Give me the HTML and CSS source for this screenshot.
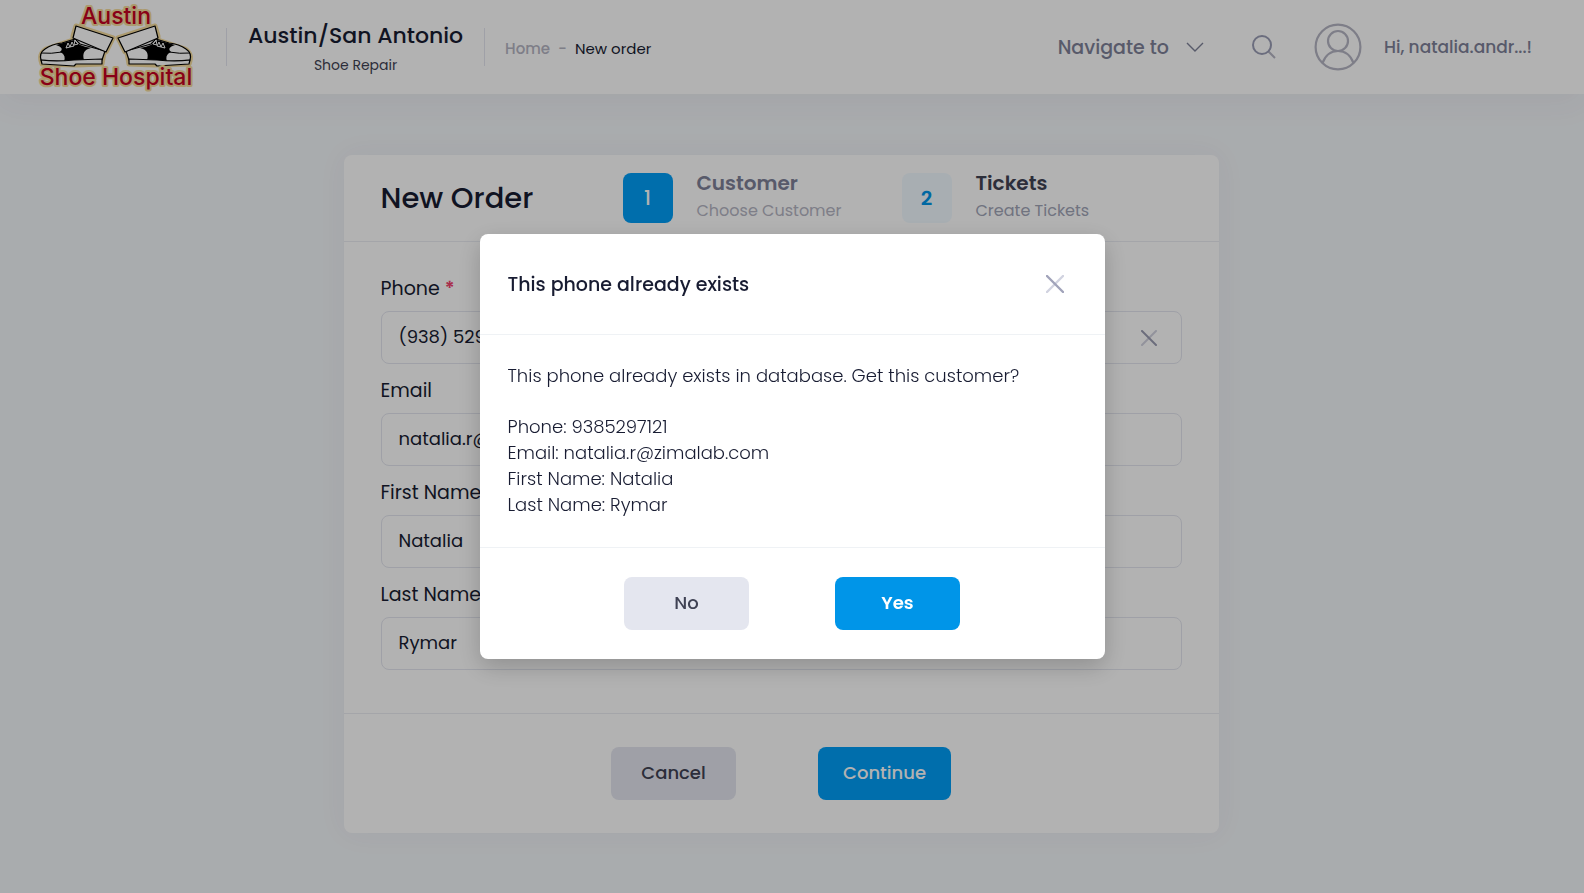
FILE: index.html
```html
<!DOCTYPE html>
<html lang="en">
<head>
<meta charset="utf-8">
<meta name="viewport" content="width=device-width, initial-scale=1">
<title>New order</title>
<link rel="stylesheet" href="styles.css">
</head>
<body>
<header class="topbar">
  <a class="brand" href="#" aria-label="Austin Shoe Hospital">
    <svg class="brand-logo" viewBox="0 0 160 90" width="160" height="90">
      <defs>
        <g id="shoe">
          <path class="halo" d="M38 24 L75 36 L68 50 L66 50 L64 62 L38 63 L4 62 Q0 52 8 47 L35 38 L35 34 Z"/>
          <path class="leather" d="M3 58 Q1 51 7 47 Q14 42 24 41 L37 37 L42 42 L67 49 L64 58 Q36 61 3 58 Z"/>
          <path class="patch" d="M18 43 L25 41 L36 38 Q40 44 53 46 Q43 48 46 58 L26 59 Q28 54 24 51 L22 50 Q27 46 18 43 Z"/>
          <path class="line" d="M3 51 Q13 52 24 50"/>
          <path class="leather" d="M3 58 Q18 60 36 58 L64 57 L64 62 L38 62 L36 64 L4 62 Z"/>
          <path class="leather" d="M38 24 L75 36 L68 50 L35 36 Z"/>
          <path class="lace" d="M30 41 L28 46 L32 45 Z M34 40 L32 45 L36 44 Z M37 38 L36 43 L40 42 Z"/>
        </g>
      </defs>
      <use href="#shoe"/>
      <use href="#shoe" transform="translate(155 0) scale(-1 1)"/>
      <text class="logo-text" x="78" y="22" text-anchor="middle">Austin</text>
      <text class="logo-text" x="78" y="83" text-anchor="middle">Shoe Hospital</text>
    </svg>
  </a>
  <div class="store">
    <div class="store-name">Austin/San Antonio</div>
    <div class="store-kind">Shoe Repair</div>
  </div>
  <nav class="crumbs" aria-label="Breadcrumb">
    <a href="#">Home</a><span class="dash">-</span><span>New order</span>
  </nav>
  <div class="tools">
    <button class="navigate" type="button">Navigate to
      <svg width="18" height="12" viewBox="0 0 18 12"><path d="M1 2 L9 10 L17 2" fill="none" stroke="#7e8299" stroke-width="1.4"/></svg>
    </button>
    <button class="plain" type="button" aria-label="Search">
      <svg width="26" height="26" viewBox="0 0 26 26" fill="none" stroke-width="2"><path d="M17 17 L24 24" stroke="#b5b5c3"/><circle cx="11" cy="11" r="9" stroke="#9a9db5"/></svg>
    </button>
    <button class="account" type="button">
      <svg width="48" height="48" viewBox="0 0 48 48" fill="none" stroke="#b5b5c3" stroke-width="2.2"><circle cx="24" cy="24" r="22.4"/><circle cx="24" cy="18" r="10"/><path d="M8.500 40 Q13 28 24 28 Q35 28 39.500 40"/></svg>
      <span>Hi, natalia.andr...!</span>
    </button>
  </div>
</header>

<main class="page">
  <form class="card">
    <div class="card-head">
      <h1>New Order</h1>
      <ol class="steps">
        <li class="step current"><span class="num">1</span><div class="step-text"><div class="step-name">Customer</div><div class="step-note">Choose Customer</div></div></li>
        <li class="step"><span class="num">2</span><div class="step-text"><div class="step-name">Tickets</div><div class="step-note">Create Tickets</div></div></li>
      </ol>
    </div>
    <div class="fields">
      <div class="field">
        <label for="phone">Phone <span class="required">*</span></label>
        <div class="control">
          <input id="phone" type="tel" value="(938) 529-7121">
          <button class="clear" type="button" aria-label="Clear phone">
            <svg width="16" height="16" viewBox="0 0 16 16" stroke-width="2" stroke-linecap="round"><path d="M15 1 L1 15" stroke="#d1d3e0"/><path d="M1 1 L15 15" stroke="#9a9cb2"/></svg>
          </button>
        </div>
      </div>
      <div class="field">
        <label for="email">Email</label>
        <div class="control"><input id="email" type="email" value="natalia.r@zimalab.com"></div>
      </div>
      <div class="field">
        <label for="first">First Name</label>
        <div class="control"><input id="first" type="text" value="Natalia"></div>
      </div>
      <div class="field">
        <label for="last">Last Name</label>
        <div class="control"><input id="last" type="text" value="Rymar"></div>
      </div>
    </div>
    <div class="card-foot">
      <button class="btn muted" type="button">Cancel</button>
      <button class="btn primary" type="button">Continue</button>
    </div>
  </form>
</main>

<div class="overlay">
  <section class="modal" role="dialog" aria-modal="true" aria-labelledby="modal-title">
    <div class="modal-head">
      <h2 id="modal-title">This phone already exists</h2>
      <button class="plain" type="button" aria-label="Close">
        <svg width="18" height="18" viewBox="0 0 18 18" stroke-width="2.4" stroke-linecap="round"><path d="M17 1 L1 17" stroke="#d1d3e0"/><path d="M1 1 L17 17" stroke="#a1a3ba"/></svg>
      </button>
    </div>
    <div class="modal-body">
      <p>This phone already exists in database. Get this customer?</p>
      <p>Phone: 9385297121<br>Email: natalia.r@zimalab.com<br>First Name: Natalia<br>Last Name: Rymar</p>
    </div>
    <div class="modal-foot">
      <button class="btn muted" type="button">No</button>
      <button class="btn primary strong" type="button">Yes</button>
    </div>
  </section>
</div>
</body>
</html>
```
FILE: styles.css
```css
* { box-sizing: border-box; }
body {
  margin: 0;
  min-height: 100vh;
  background: #f3f6f9;
  color: #181c32;
  font-family: Poppins, Inter, "Liberation Sans", sans-serif;
  font-size: 18px;
}
h1, h2, p, ol { margin: 0; padding: 0; font-weight: 500; }
button, input { font: inherit; color: inherit; }
button { border: 0; padding: 0; background: none; cursor: pointer; }
a { color: inherit; text-decoration: none; }
svg { display: block; }

.topbar {
  display: flex;
  align-items: center;
  height: 94px;
  padding: 0 52px 0 38px;
  background: #fff;
  box-shadow: 0 10px 30px rgba(82, 63, 105, 0.05);
}
.brand { padding-right: 28px; }
.logo-text {
  font-family: Inter, "Liberation Sans", sans-serif;
  font-size: 23px;
  font-weight: 500;
  fill: #c40022;
  stroke: #f5dc9c;
  stroke-width: 4px;
  stroke-linejoin: round;
  paint-order: stroke;
}
.halo { fill: none; stroke: #f5dc9c; stroke-width: 5px; stroke-linejoin: round; }
.leather { fill: #fff; stroke: #000; stroke-width: 1.2px; stroke-linejoin: round; }
.patch { fill: #000; }
.line { fill: none; stroke: #000; stroke-width: 1px; }
.lace { fill: none; stroke: #fff; stroke-width: 1px; }

.store {
  height: 38px;
  padding: 4px 21px 0;
  border: solid #e4e6ef;
  border-width: 0 1px;
  display: flex;
  flex-direction: column;
  justify-content: center;
  text-align: center;
}
.store-name { font-size: 22px; line-height: 32px; font-weight: 500; }
.store-kind { font-size: 14px; line-height: 26px; color: #3f4254; }
.crumbs { display: flex; gap: 8px; padding: 2px 0 0 20px; font-size: 15px; }
.crumbs a, .dash { color: #b5b5c3; font-weight: 500; }
.tools { display: flex; align-items: center; margin-left: auto; color: #7e8299; font-weight: 500; }
.navigate { display: flex; align-items: center; gap: 17px; font-size: 19px; font-weight: 500; margin-right: 47px; }
.account { display: flex; align-items: center; gap: 22px; margin-left: 37px; font-size: 17px; font-weight: 500; }

.page { padding: 61px 22px 60px 0; }
.card {
  max-width: 875px;
  margin: 0 auto;
  background: #fff;
  border-radius: 8px;
  box-shadow: 0 0 30px rgba(82, 63, 105, 0.05);
}
.card-head {
  display: flex;
  align-items: center;
  height: 87px;
  padding: 0 37px;
  border-bottom: 1px solid #ebedf3;
}
h1 { flex: 0 0 242px; font-size: 29px; }
.steps { display: flex; list-style: none; }
.step { display: flex; align-items: center; gap: 24px; flex: 0 0 279px; }
.num {
  flex: none;
  width: 50px;
  height: 50px;
  border-radius: 8px;
  background: #f1faff;
  color: #0095e8;
  font-size: 20px;
  font-weight: 600;
  line-height: 50px;
  text-align: center;
}
.step-text { padding-bottom: 2px; }
.step-name { font-size: 20px; line-height: 28px; font-weight: 600; color: #3f4254; }
.step-note { font-size: 16px; line-height: 28px; font-weight: 400; color: #a1a5b7; }
.current .num { background: #009ef7; color: #fff; font-weight: 500; }
.current .step-name { color: #7e8299; }
.current .step-note { color: #b5b5c3; }

.fields { display: grid; gap: 14px; padding: 34px 37px 43px; }
.field label { display: block; font-size: 19px; line-height: 26px; margin-bottom: 9px; }
.required { color: #f1416c; font-weight: 600; }
.control { position: relative; }
.control input {
  display: block;
  width: 100%;
  height: 53px;
  padding: 0 17px 2px;
  border: 1px solid #e4e6ef;
  border-radius: 8px;
  background: #fff;
}
.clear { position: absolute; right: 25px; top: 19px; }
.card-foot {
  display: flex;
  justify-content: center;
  gap: 82px;
  padding: 33px 37px;
  border-top: 1px solid #ebedf3;
}
.btn { min-width: 125px; height: 53px; padding: 0 25px 2px; border-radius: 8px; font-weight: 500; }
.muted { background: #e4e6ef; color: #3f4254; }
.primary { background: #009ef7; color: #fff; }
.strong { background: #0095e8; font-weight: 600; }

.overlay {
  position: fixed;
  inset: 0;
  display: flex;
  align-items: center;
  justify-content: center;
  background: rgba(0, 0, 0, 0.3);
}
.modal {
  width: 625px;
  max-width: 100%;
  background: #fff;
  border-radius: 8px;
  box-shadow: 0 8px 24px rgba(0, 0, 0, 0.2);
}
.modal-head {
  display: flex;
  align-items: center;
  justify-content: space-between;
  height: 101px;
  padding: 0 41px 0 28px;
  border-bottom: 1px solid #eff2f5;
}
h2 { font-size: 19px; font-weight: 500; }
.modal-body { display: grid; gap: 25px; padding: 28px 28px 29px; }
.modal-body p { font-weight: 300; line-height: 26px; }
.modal-foot {
  display: flex;
  justify-content: center;
  gap: 86px;
  padding: 29px 28px;
  border-top: 1px solid #eff2f5;
}
```
